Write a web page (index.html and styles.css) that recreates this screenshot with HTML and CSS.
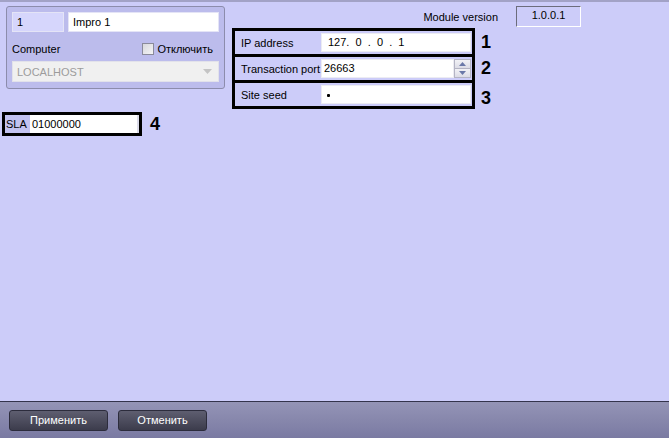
FILE: index.html
```html
<!DOCTYPE html>
<html>
<head>
<meta charset="utf-8">
<link rel="stylesheet" href="styles.css">
</head>
<body>
<div class="screen">
  <div class="content">
    <div class="top">
      <div class="group">
        <div class="g-row1">
          <div class="field field-id">1</div>
          <div class="field field-name">Impro 1</div>
        </div>
        <div class="g-row2">
          <span>Computer</span>
          <span class="chk"><span class="chkbox"></span>Отключить</span>
        </div>
        <div class="combo">
          <span>LOCALHOST</span>
          <svg class="arrow" width="9" height="5" viewBox="0 0 9 5"><path d="M0 0H9L4.5 5Z" fill="#c4c4c4"/></svg>
        </div>
      </div>
      <div class="rightcol">
        <div class="version-row">
          <span class="version-label">Module version</span>
          <div class="version-box">1.0.0.1</div>
        </div>
        <div class="fields">
          <div class="box">
            <div class="brow">
              <div class="blabel">IP address</div>
              <div class="binput ip">127.&nbsp;&nbsp;0&nbsp;&nbsp;.&nbsp;&nbsp;0&nbsp;&nbsp;.&nbsp;&nbsp;1</div>
            </div>
            <div class="brow">
              <div class="blabel">Transaction port</div>
              <div class="binput port">26663</div>
              <div class="spin">
                <div class="spin-btn"><svg width="7" height="4" viewBox="0 0 7 4"><path d="M0 4H7L3.5 0Z" fill="#6a78a8"/></svg></div>
                <div class="spin-btn"><svg width="7" height="4" viewBox="0 0 7 4"><path d="M0 0H7L3.5 4Z" fill="#6a78a8"/></svg></div>
              </div>
            </div>
            <div class="brow">
              <div class="blabel">Site seed</div>
              <div class="binput seed"><span class="dot"></span></div>
            </div>
          </div>
          <div class="nums">
            <div class="num">1</div>
            <div class="num">2</div>
            <div class="num num3">3</div>
          </div>
        </div>
      </div>
    </div>
    <div class="sla-row">
      <div class="sla-box">
        <div class="sla-label">SLA</div>
        <div class="sla-input">01000000</div>
      </div>
      <div class="num num4">4</div>
    </div>
  </div>
  <div class="bar">
    <div class="btn btn-apply">Применить</div>
    <div class="btn btn-cancel">Отменить</div>
  </div>
</div>
</body>
</html>
```
FILE: styles.css
```css
html, body {
  margin: 0;
  padding: 0;
}
body {
  width: 669px;
  height: 438px;
  overflow: hidden;
  font-family: "Liberation Sans", Arial, sans-serif;
  font-size: 11px;
  color: #000;
}
.screen {
  display: flex;
  flex-direction: column;
  height: 438px;
}
.content {
  height: 401px;
  box-sizing: border-box;
  background: #ccccf9;
  border-top: 2px solid #a2a2c6;
}
.top {
  display: flex;
  align-items: flex-start;
}
.group {
  box-sizing: border-box;
  width: 219px;
  height: 83px;
  margin: 4px 0 0 6px;
  border: 1px solid #8c8cac;
  border-radius: 3px;
  background: #bcbcec;
  padding: 5px 5px 0 5px;
  display: flex;
  flex-direction: column;
}
.g-row1 {
  display: flex;
  gap: 4px;
  height: 20px;
}
.field {
  box-sizing: border-box;
  height: 20px;
  border: 1px solid #e4e4f6;
  padding: 3px 0 0 4px;
  line-height: 13px;
}
.field-id {
  width: 52px;
  background: #d6d6fc;
}
.field-name {
  width: 151px;
  background: #fff;
}
.g-row2 {
  display: flex;
  justify-content: space-between;
  align-items: center;
  margin-top: 10px;
  height: 13px;
  padding-right: 6px;
}
.chk {
  display: flex;
  align-items: center;
  gap: 3px;
}
.chkbox {
  box-sizing: border-box;
  width: 12px;
  height: 12px;
  border: 1px solid #8a8a9a;
  background: linear-gradient(135deg, #d8d8dc, #f4f4f6);
}
.combo {
  box-sizing: border-box;
  margin-top: 6px;
  height: 21px;
  width: 207px;
  background: #f0f0f0;
  border: 1px solid #e2e2ea;
  color: #9c9c9c;
  display: flex;
  align-items: center;
  justify-content: space-between;
  padding: 0 6px 0 4px;
}
.arrow {
  display: block;
}
.rightcol {
  margin: 4px 0 0 7px;
  display: flex;
  flex-direction: column;
}
.version-row {
  width: 349px;
  height: 21px;
  display: flex;
  justify-content: flex-end;
  align-items: center;
  gap: 18px;
  margin-bottom: 1px;
}
.version-label {
  padding-top: 1px;
}
.version-box {
  box-sizing: border-box;
  width: 65px;
  height: 21px;
  border-top: 1px solid #6c6c7c;
  border-left: 1px solid #6c6c7c;
  border-right: 1px solid #fff;
  border-bottom: 1px solid #fff;
  text-align: center;
  line-height: 17px;
}
.fields {
  display: flex;
  align-items: flex-start;
}
.box {
  width: 243px;
  box-sizing: border-box;
  border: 3px solid #000;
}
.brow {
  height: 23px;
  display: flex;
  align-items: center;
}
.brow + .brow {
  border-top: 3px solid #000;
}
.blabel {
  width: 80px;
  padding-left: 6px;
  flex: none;
}
.binput {
  box-sizing: border-box;
  flex: 1;
  height: 19px;
  margin-right: 1px;
  background: #fff;
  border: 1px solid #ececf2;
  padding-left: 5px;
  line-height: 17px;
  display: flex;
  align-items: center;
}
.ip {
  padding-left: 6px;
}
.port {
  margin-right: 0;
  padding-left: 2px;
}
.spin {
  width: 17px;
  height: 19px;
  margin-right: 1px;
  display: flex;
  flex-direction: column;
  background: #fff;
}
.spin-btn {
  box-sizing: border-box;
  flex: 1;
  border: 1px solid #b4b4c4;
  background: linear-gradient(#f2f2f6, #dcdce6);
  display: flex;
  align-items: center;
  justify-content: center;
}
.spin-btn + .spin-btn {
  border-top: none;
}
.spin-btn svg {
  display: block;
}
.dot {
  width: 3px;
  height: 3px;
  background: #000;
  border-radius: 1px;
  margin-top: 2px;
}
.nums {
  margin-left: 6px;
  padding-top: 3px;
  display: flex;
  flex-direction: column;
}
.num {
  font-weight: bold;
  font-size: 18px;
  height: 26px;
  line-height: 23px;
}
.num3 {
  padding-top: 4px;
}
.sla-row {
  display: flex;
  align-items: center;
  margin: -1px 0 0 2px;
}
.sla-box {
  box-sizing: border-box;
  width: 140px;
  height: 24px;
  border: 3px solid #000;
  display: flex;
}
.sla-label {
  width: 24px;
  background: #c2c2f0;
  padding-left: 1px;
  line-height: 18px;
}
.sla-input {
  flex: 1;
  background: #fff;
  border-right: 2px solid #dcdcea;
  padding-left: 2px;
  line-height: 18px;
}
.num4 {
  margin-left: 8px;
  height: auto;
  line-height: 20px;
}
.bar {
  flex: 1;
  border-top: 1px solid #34344c;
  background: linear-gradient(#9494b6, #7a7aa2);
  display: flex;
  gap: 10px;
  padding: 8px 0 0 9px;
}
.btn {
  box-sizing: border-box;
  height: 21px;
  border: 1px solid #2c2c3c;
  border-radius: 3px;
  background: linear-gradient(#5e5e70, #3c3c4c);
  color: #fff;
  text-align: center;
  line-height: 19px;
}
.btn-apply {
  width: 99px;
}
.btn-cancel {
  width: 89px;
}
```
